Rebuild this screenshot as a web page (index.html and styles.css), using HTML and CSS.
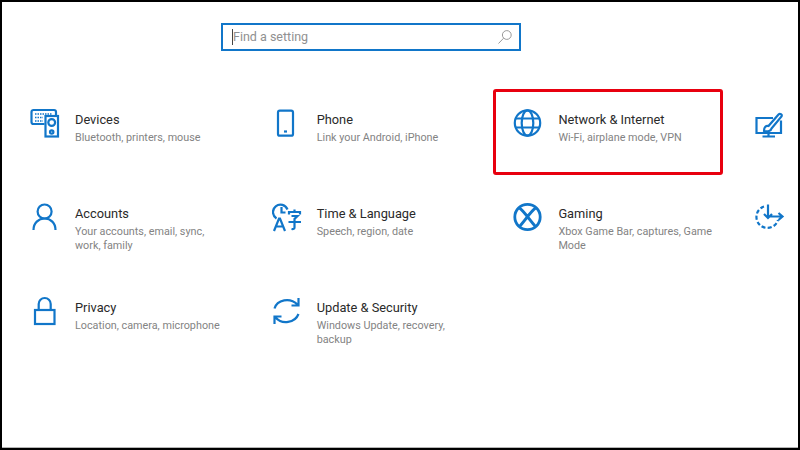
FILE: index.html
```html
<!DOCTYPE html>
<html lang="en">
<head>
<meta charset="utf-8">
<title>Settings</title>
<link rel="stylesheet" href="styles.css">
</head>
<body>
<main class="frame">
  <div class="search">
    <span class="caret"></span>
    <span class="placeholder">Find a setting</span>
    <svg class="search-icon" viewBox="0 0 16 16"><circle cx="9.8" cy="6" r="4.4"/><path d="M6.6 9.2 1.5 14.5"/></svg>
  </div>
  <div class="grid">
    <section class="card">
      <svg class="icon" viewBox="0 0 30 30"><path d="M14.5 16H3.5A2 2 0 0 1 1.5 14V4A2 2 0 0 1 3.5 2H24A2 2 0 0 1 26 4V7"/><rect x="15.5" y="8" width="12.5" height="20.5"/><circle cx="21.7" cy="14.5" r="3.4"/><circle cx="21.7" cy="24" r="1.7"/><path class="dots" d="M5 6H22M5 9.5H13M5 13H13"/></svg>
      <div class="text"><h2>Devices</h2><p>Bluetooth, printers, mouse</p></div>
    </section>
    <section class="card">
      <svg class="icon" viewBox="0 0 30 30"><rect x="6" y="2.7" width="15" height="25" rx="1.8"/><path d="M12 23.5H15"/></svg>
      <div class="text"><h2>Phone</h2><p>Link your Android, iPhone</p></div>
    </section>
    <section class="card">
      <svg class="icon" viewBox="0 0 30 30"><circle cx="14.5" cy="15" r="12.7"/><ellipse cx="14.5" cy="15" rx="5.8" ry="12.7"/><path d="M2.8 10.5H26.2M2.8 19.5H26.2"/></svg>
      <div class="text"><h2>Network &amp; Internet</h2><p>Wi-Fi, airplane mode, VPN</p></div>
      <div class="highlight"></div>
    </section>
    <section class="card">
      <svg class="icon" viewBox="0 0 30 30"><path d="M18 10H1.500V25H26V12.500M13.500 25V28M7.500 28.500H20"/><path d="M9 23C9 19 11 17.500 13.500 18L23.500 6.500C25 5 27.500 6.500 26.500 8.500L16.500 20.500C16 23 13 24 9 23Z"/></svg>
    </section>

    <section class="card">
      <svg class="icon" viewBox="0 0 30 30"><circle cx="14.6" cy="9.5" r="7"/><path d="M3.5 28C3.5 21 8.5 16.500 14.6 16.500S25.500 21 25.500 28"/></svg>
      <div class="text"><h2>Accounts</h2><p>Your accounts, email, sync, work, family</p></div>
    </section>
    <section class="card">
      <svg class="icon" viewBox="0 0 30 30"><path d="M4.5 16.500A7.500 7.500 0 1 1 15.500 7.500"/><path d="M9.500 5V10.500H13.500"/><path d="M2 29 7 16.500H8L13 29M4 24.500H11"/><path d="M17 12.500V10H28V12.500M19.500 14H25.500L22.500 17V25.500Q22.500 27.500 19.500 27M16.500 20H29M22.500 7.500V10"/></svg>
      <div class="text"><h2>Time &amp; Language</h2><p>Speech, region, date</p></div>
    </section>
    <section class="card">
      <svg class="icon icon-gaming" viewBox="0 0 30 30"><circle cx="14.5" cy="15" r="12.7"/><path class="x" d="M6.500 6C11 9 18 20 23 25M22.500 6C18 9 11 20 6 25"/></svg>
      <div class="text"><h2>Gaming</h2><p>Xbox Game Bar, captures, Game Mode</p></div>
    </section>
    <section class="card">
      <svg class="icon" viewBox="0 0 30 30"><path class="dash" d="M9 4.500A11 11 0 1 0 23 18"/><path d="M13 2.500V16M9 12 13 16 17 12M15 14.500H27M23.500 11 27.500 14.500 23.500 18"/></svg>
    </section>

    <section class="card">
      <svg class="icon" viewBox="0 0 30 30"><rect x="5" y="14" width="19.500" height="14"/><path d="M8.700 14V8A6 6 0 0 1 20.700 8V14"/></svg>
      <div class="text"><h2>Privacy</h2><p>Location, camera, microphone</p></div>
    </section>
    <section class="card">
      <svg class="icon" viewBox="0 0 30 30"><path d="M2.500 12.500C5 3.500 18 1 25.500 8.500M26.500 2V9.500H19.500"/><path d="M26.500 18C23 27 10 29 3.500 21.500M2.500 28V20.500H9.500"/></svg>
      <div class="text"><h2>Update &amp; Security</h2><p>Windows Update, recovery, backup</p></div>
    </section>
  </div>
</main>
</body>
</html>
```
FILE: styles.css
```css
* { box-sizing: border-box; }
html, body { margin: 0; height: 100%; }
body { background: #000; overflow: hidden; font-family: Roboto, "Liberation Sans", sans-serif; }
.frame {
  width: 796px; height: 446px; margin: 2px 0 0 2px;
  background: #fff; border-bottom: 1px solid #b5b5b5;
  overflow: hidden; padding: 21px 0 0 28px;
}
.search {
  width: 300px; height: 28px; margin-left: 191px;
  border: 2px solid #1176c9; display: flex; align-items: center; padding-left: 9px;
}
.caret { width: 1px; height: 16px; background: #444; }
.placeholder { font-size: 12.5px; color: #909090; flex: 1; margin-top: -1px; }
.search-icon { width: 16px; height: 16px; margin-right: 6px; fill: none; stroke: #9a9a9a; stroke-width: 1; }
.grid {
  display: grid; grid-template-columns: repeat(4, 241.7px); grid-auto-rows: 94px;
  margin-top: 57px;
}
.card { position: relative; display: flex; align-items: flex-start; }
.icon { width: 30px; height: 30px; flex: none; fill: none; stroke: #1176c9; stroke-width: 2.2; }
.icon .dots { stroke-width: 1.6; stroke-dasharray: 1.5 1; }
.icon .dash { stroke-dasharray: 4 2.2; }
.icon-gaming circle { stroke-width: 2.8; }
.icon-gaming .x { stroke-width: 3; }
.text { margin-left: 15px; width: 155px; padding-top: 2px; }
h2 { margin: 0; font-size: 12.8px; line-height: 20px; font-weight: 400; color: #2a2a2a; white-space: nowrap; }
p { margin: 0; font-size: 10.8px; line-height: 14px; color: #838383; padding-top: 1px; }
.highlight {
  position: absolute; left: -20px; top: -19px; width: 230px; height: 86px;
  border: 3px solid #e8000f; border-radius: 3px;
}
```
